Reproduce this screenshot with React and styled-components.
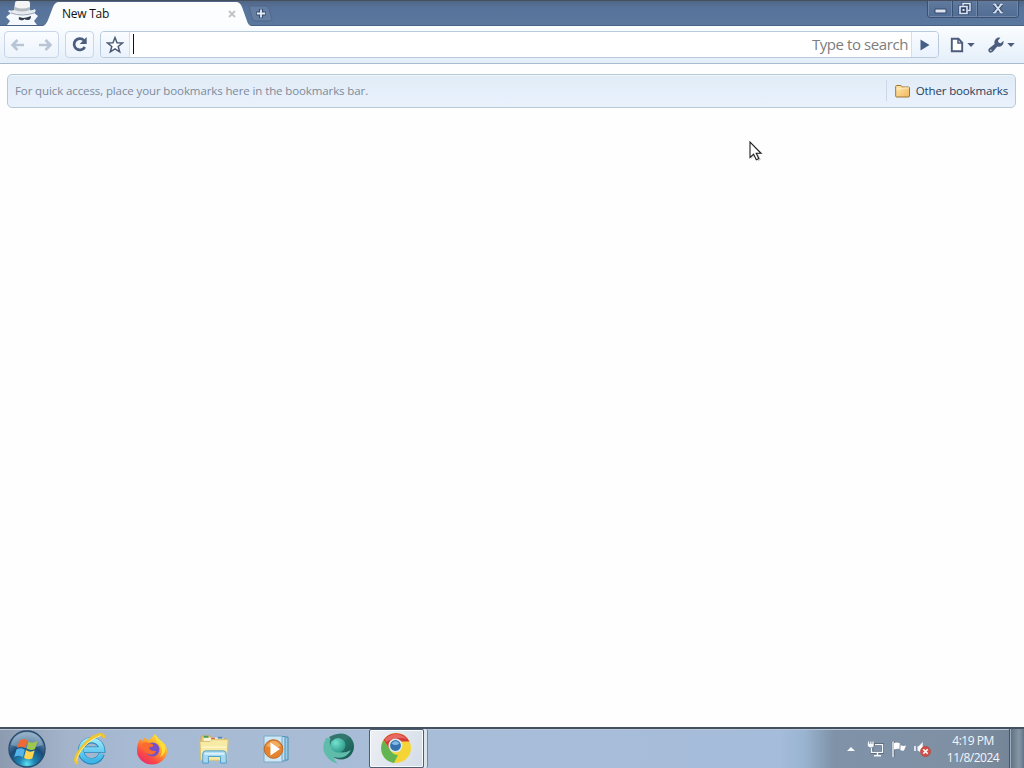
import React from "react";
import styled, { createGlobalStyle } from "styled-components";

const GlobalStyle = createGlobalStyle`
    * {
        box-sizing: border-box;
    }

    body {
        margin: 0;
        overflow: hidden;
        font-family: "Open Sans", "Noto Sans", sans-serif;
        font-size: 12px;
    }

    svg {
        display: block;
        flex: none;
    }
`;

function IncognitoIcon() {
    return (
        <svg width="32" height="24" viewBox="0 0 32 24">
            <path d="M1 24 L4 20 L0 16 L6 11 L27 11 L32 15 L28 20 L31 24 Z" fill="#f5f8fc" />
            <path d="M3 9 Q1 11 5 12 Q15 15 27 12 Q31 11 29 8 Q26 10 23 9 L8 9 Q5 10 3 9 Z" fill="#e7ebef" />
            <path d="M9 2 Q9 0 11 0 L22 0 Q24 0 24 2 L24 10 Q16 12 8 10 Z" fill="#f3f4f3" />
            <path d="M9 6 Q16 9 24 6 L24 9 Q16 12 8 9 Z" fill="#b3babf" />
            <path d="M5 12 Q16 16 28 12" stroke="#9ba8ba" fill="none" />
            <path d="M13 16 L17 17 Q20 17 25 15 Q25 19 22 19 Q19 19 18.5 18 Q17 20 14.5 19 Q12 19 13 16 Z" fill="#343e4d" />
        </svg>
    );
}

function ArrowIcon({ flip }) {
    return (
        <svg width="16" height="14" viewBox="0 0 16 14">
            <path
                d={flip ? "M8.5 2 L13.5 7 L8.5 12 M13 7 H2" : "M7.5 2 L2.5 7 L7.5 12 M3 7 H14"}
                fill="none"
                stroke="#b8c5d4"
                strokeWidth="2.6"
            />
        </svg>
    );
}

function ReloadIcon() {
    return (
        <svg width="17" height="17" viewBox="0 0 17 17">
            <path d="M13 4.4 A5.7 5.7 0 1 0 13.8 11" fill="none" stroke="#4b5c7c" strokeWidth="2.7" />
            <path d="M15.7 1 V8 H8.7 Z" fill="#4b5c7c" />
        </svg>
    );
}

function StarIcon() {
    return (
        <svg width="18" height="18" viewBox="0 0 18 18">
            <path
                d="M9 1.6 L11 6.7 L16.4 7 L12.2 10.5 L13.7 15.9 L9 12.9 L4.3 15.9 L5.8 10.5 L1.6 7 L7 6.7 Z"
                fill="#fff"
                stroke="#4b5b77"
                strokeWidth="1.5"
            />
        </svg>
    );
}

function PageIcon() {
    return (
        <svg width="14" height="16" viewBox="0 0 14 16">
            <path d="M1.8 1.8 H8.4 L12.2 5.7 V14.2 H1.8 Z" fill="#fff" stroke="#4b5c7c" strokeWidth="1.9" />
            <path d="M8 2 V6 H12" fill="none" stroke="#4b5c7c" strokeWidth="1.5" />
        </svg>
    );
}

function WrenchIcon() {
    return (
        <svg width="16" height="16" viewBox="0 0 16 16">
            <path d="M1 11.4 L6.6 7 Q5.8 4 7.8 1.9 Q9.8 0 12.4 0.8 L10 3.4 L10.5 5.6 L12.8 6.2 L15.4 3.8 Q16 6.6 14 8.6 Q12 10.3 9.3 9.6 L4.8 14.8 Q2.7 16.4 1 14.9 Q-0.4 13.2 1 11.4 Z" fill="#4b5c7c" />
            <circle cx="2.8" cy="13.2" r="0.8" fill="#e6eef8" />
        </svg>
    );
}

function CaretIcon() {
    return (
        <svg width="8" height="4" viewBox="0 0 8 4">
            <path d="M0.3 0 H7.7 L4 4 Z" fill="#4b5c7c" />
        </svg>
    );
}

function FolderIcon() {
    return (
        <svg width="16" height="14" viewBox="0 0 16 14">
            <defs>
                <linearGradient id="folder" x1="0" y1="0" x2="1" y2="1">
                    <stop offset="0" stopColor="#ffe8b0" />
                    <stop offset="1" stopColor="#f1b85c" />
                </linearGradient>
            </defs>
            <path d="M0.7 12 V2.5 Q0.7 1.5 1.7 1.5 H6 L7.5 3 H13.5 Q14.5 3 14.5 4 V12 Q14.5 13 13.5 13 H1.7 Q0.7 13 0.7 12 Z" fill="url(#folder)" stroke="#9c7438" />
            <path d="M1.5 5 H7 L8.5 4 H14" stroke="#fff0c6" fill="none" />
        </svg>
    );
}

function StartOrb() {
    return (
        <svg width="40" height="40" viewBox="0 0 40 40">
            <defs>
                <radialGradient id="orb" cx="50%" cy="92%" r="85%">
                    <stop offset="0" stopColor="#5fe0f2" />
                    <stop offset="0.25" stopColor="#1f86b4" />
                    <stop offset="0.6" stopColor="#1b4c78" />
                    <stop offset="1" stopColor="#7f9db8" />
                </radialGradient>
            </defs>
            <circle cx="20" cy="20" r="18" fill="url(#orb)" stroke="#294d70" strokeWidth="1.4" />
            <path d="M4 16 Q7 4 20 3.5 Q33 4 36 16 Q20 22 4 16 Z" fill="#b5cddd" opacity="0.42" />
            <path d="M12.5 11.5 Q17 8.5 20.5 11.5 L18.5 19 Q14.5 16.5 10 19 Z" fill="#ef6934" />
            <path d="M21.5 12.5 Q25 15 30.5 12 L28 20 Q24 22 19.5 19.5 Z" fill="#9fc74b" />
            <path d="M9.5 20.5 Q13.5 18 17.8 20.8 L15.8 28.3 Q12 25.5 7.3 28 Z" fill="#55b5ea" />
            <path d="M19 21 Q23 24 27.6 21.5 L25.3 29.5 Q21 31.5 17 28.7 Z" fill="#ffd451" />
        </svg>
    );
}

function ExplorerEIcon() {
    return (
        <svg width="34" height="34" viewBox="0 0 34 34">
            <defs>
                <linearGradient id="ie" x1="0" y1="0" x2="0" y2="1">
                    <stop offset="0" stopColor="#9be8fc" />
                    <stop offset="1" stopColor="#3fb4e6" />
                </linearGradient>
            </defs>
            <path d="M28.6 22 A10.5 10.5 0 1 1 29 17.6 H11" fill="none" stroke="#2789bd" strokeWidth="6.4" />
            <path d="M28.4 22 A10.5 10.5 0 1 1 29 17.6 H11" fill="none" stroke="url(#ie)" strokeWidth="4.8" />
            <path d="M5 31.5 Q-1 29 8 17 Q16 6 25 3 Q31 1 31 6" fill="none" stroke="#eec62f" strokeWidth="3" />
            <path d="M4 29 Q3 26 9 17 Q17 7 28 3.5" fill="none" stroke="#ffec85" />
        </svg>
    );
}

function FirefoxIcon() {
    return (
        <svg width="32" height="32" viewBox="0 0 32 32">
            <defs>
                <linearGradient id="fox" x1="0.85" y1="0" x2="0.15" y2="1">
                    <stop offset="0" stopColor="#fff04a" />
                    <stop offset="0.4" stopColor="#ffa428" />
                    <stop offset="0.72" stopColor="#fb4a45" />
                    <stop offset="1" stopColor="#e62574" />
                </linearGradient>
            </defs>
            <path d="M4 6 L7 8 L8 4.5 L12 7.5 Q16 5 19 1 Q20 5 24 7 Q31 11 31 18 A15 13.5 0 0 1 1 18 Q1 11 4 6 Z" fill="url(#fox)" />
            <circle cx="16.5" cy="16.5" r="7" fill="#7550c6" />
            <path d="M5 12 Q8 7.5 14 10.5 Q18 10.5 17 13.5 L13 14.5 Q14 18.5 20 18 Q18 23 12.5 21 Q7 18 6 13" fill="#fb6a2e" />
            <path d="M19 1 Q19 8 24 12 Q28 18 24 24 Q31 20 29 12 Q24 8 19 1 Z" fill="#ffdd37" />
        </svg>
    );
}

function FileExplorerIcon() {
    return (
        <svg width="34" height="30" viewBox="0 0 34 32">
            <path d="M3 4 Q3 2 5 2 H13 L15 5 H29 Q31 5 31 7 V27 H3 Z" fill="#e4cb78" stroke="#c9ab56" />
            <path d="M6 4 H27 V12 H6 Z" fill="#f9f4d6" />
            <path d="M6 3 H11" stroke="#4a9d60" strokeWidth="2" />
            <path d="M14 5 H18" stroke="#d96655" strokeWidth="2" />
            <path d="M21 4 H26" stroke="#5688be" strokeWidth="2" />
            <path d="M2 8 H13 L15 6 H32 L31 28 H3 Z" fill="#f7eaa5" stroke="#d9c26e" />
            <path d="M4 14 H30 M4 19 H30" stroke="#fff5c4" strokeWidth="2" />
            <path d="M5 31 V21 Q5 18 8 18 H27 Q30 18 30 21 V31 H24 V24 H11 V31 Z" fill="#a8d9f2" stroke="#4a9bc8" />
            <path d="M7 21 H28" stroke="#dbf4ff" strokeWidth="2" />
        </svg>
    );
}

function MediaPlayerIcon() {
    return (
        <svg width="28" height="28" viewBox="0 0 28 28">
            <path d="M8 2 H26 V25 H8 Z" fill="#9bcce7" stroke="#4e89ae" />
            <path d="M5 1.5 H23 V26 H5 Z" fill="#b8def1" stroke="#5592b8" />
            <path d="M2 1 H20 V27 H2 Z" fill="#cfe6f4" stroke="#78aac9" />
            <circle cx="11.5" cy="14" r="9.3" fill="#e5842f" stroke="#b96a2d" />
            <path d="M4 11 Q12 1 19 11 Q12 14 4 11 Z" fill="#f9bd77" opacity="0.7" />
            <path d="M8.5 7.5 L18 14 L8.5 20.5 Z" fill="#fff" />
        </svg>
    );
}

function TealSwirlIcon() {
    return (
        <svg width="34" height="34" viewBox="0 0 34 34">
            <defs>
                <linearGradient id="teal" x1="0" y1="0" x2="1" y2="1">
                    <stop offset="0" stopColor="#3b8b7e" />
                    <stop offset="1" stopColor="#14564f" />
                </linearGradient>
                <radialGradient id="tealBall" cx="35%" cy="35%" r="70%">
                    <stop offset="0" stopColor="#74e3cf" />
                    <stop offset="1" stopColor="#2f9a8a" />
                </radialGradient>
            </defs>
            <ellipse cx="20" cy="14.5" rx="13" ry="13" fill="url(#teal)" />
            <path d="M5 6 Q-1 17 6 25 Q10 30 17 32 Q13 28 13 25 Q25 28 30 18 Q21 23 13 18 Q7 12 9 6 Z" fill="#5fbcab" />
            <circle cx="17" cy="13" r="7.5" fill="url(#tealBall)" />
            <path d="M8 5 Q18 -1 27 5 L24 9 Q17 3 11 9 Z" fill="#34766d" />
        </svg>
    );
}

function ChromeIcon() {
    return (
        <svg width="32" height="32" viewBox="0 0 32 32">
            <circle cx="16" cy="16" r="15" fill="#f5d536" />
            <path d="M3.5 8 A15 15 0 0 1 29.5 9.5 H16 L10 18 Z" fill="#d63a36" />
            <path d="M3.5 8 L10 18 Q13 23 18 23 L14 31 A15 15 0 0 1 3.5 8 Z" fill="#62b552" />
            <path d="M5 7 Q16 -3 27 7 Q15 4 6 10 Z" fill="#f3988d" opacity="0.5" />
            <circle cx="15.5" cy="13.5" r="7" fill="#dfe9ee" />
            <circle cx="15.5" cy="13.5" r="5.4" fill="#3472ae" />
            <path d="M11.5 11.5 Q15.5 6.5 19.5 11.5 Q15.5 14.5 11.5 11.5 Z" fill="#83b8e4" />
        </svg>
    );
}

function NetworkIcon() {
    return (
        <svg width="18" height="18" viewBox="0 0 18 18">
            <path d="M6 4.5 H15.5 V12.5 H5 V8" fill="none" stroke="#3f4b58" strokeWidth="2.8" opacity="0.5" />
            <path d="M8 4.7 H15.5 V12.3 H4.5 V8" fill="none" stroke="#f4f7fa" strokeWidth="1.3" />
            <path d="M10.5 12.5 V15 M7 15.7 H14" stroke="#f4f7fa" strokeWidth="1.4" />
            <path d="M1.5 1.5 V4 M3.8 1.5 V4 M6 1.5 V4" stroke="#f4f7fa" strokeWidth="1.1" />
            <path d="M0.8 3.8 H6.8 V5.8 Q5.8 7.4 3.8 7.4 Q1.8 7.4 0.8 5.8 Z" fill="#f4f7fa" />
        </svg>
    );
}

function FlagIcon() {
    return (
        <svg width="17" height="18" viewBox="0 0 17 18">
            <path d="M2.3 1.5 V17" stroke="#46525f" strokeWidth="3" opacity="0.5" />
            <path d="M2 1.5 V17" stroke="#e7edf3" strokeWidth="1.5" />
            <path d="M3 3 Q6 2 9 3.6 V5 Q12 6.5 15 5.6 L13 10.5 Q11 11 9 9.8 V9 Q6 8.5 3 9.4 Z" fill="#fff" />
            <path d="M9 4.5 V9.5" stroke="#83909d" />
        </svg>
    );
}

function MutedIcon() {
    return (
        <svg width="18" height="18" viewBox="0 0 18 18">
            <path d="M1 6 V11" stroke="#f7f9fb" strokeWidth="1.6" />
            <path d="M3.2 6 H4.6 L9 1.5 V15.5 L4.6 11 H3.2 Z" fill="#f7f9fb" stroke="#8795a4" strokeWidth="0.6" />
            <circle cx="11.5" cy="11.5" r="4.9" fill="#cf5148" stroke="#b84842" />
            <path d="M9.3 9.3 L13.7 13.7 M13.7 9.3 L9.3 13.7" stroke="#fff" strokeWidth="1.6" />
        </svg>
    );
}

const apps = [
    { name: "Internet Explorer", Icon: ExplorerEIcon },
    { name: "Firefox", Icon: FirefoxIcon },
    { name: "File Explorer", Icon: FileExplorerIcon },
    { name: "Media Player", Icon: MediaPlayerIcon },
    { name: "Web", Icon: TealSwirlIcon },
];

export default function App() {
    return (
        <Screen>
            <GlobalStyle />
            <TitleBar>
                <Incognito><IncognitoIcon /></Incognito>
                <Tab>
                    <TabShape viewBox="0 0 208 24">
                        <path d="M0 24 Q3 23 5 18 L10 5 Q12 0 16 0 H193 Q197 0 199 5 L204 19 Q205 23 208 24 Z" fill="#fbfdff" />
                    </TabShape>
                    <TabTitle>New Tab</TabTitle>
                    <svg width="8" height="8" viewBox="0 0 8 8">
                        <path d="M1 1 L7 7 M7 1 L1 7" stroke="#c0c4c9" strokeWidth="1.8" />
                    </svg>
                </Tab>
                <NewTab aria-label="New tab">
                    <svg width="25" height="17" viewBox="0 0 25 17">
                        <path d="M1 1 H18 Q20 1 21 4 L24 14 Q24 16 22 16 H7 Q5 16 4 13 Z" fill="#637da3" stroke="#506788" />
                        <path d="M13 4 V13 M8.5 8.5 H17.5" stroke="#314867" strokeWidth="3.8" />
                        <path d="M13 4.5 V12.5 M9 8.5 H17" stroke="#e6edf6" strokeWidth="1.8" />
                    </svg>
                </NewTab>
                <WindowControls>
                    <WindowButton $width={24} aria-label="Minimize">
                        <MinimizeGlyph width="13" height="6" viewBox="0 0 13 6">
                            <path d="M1 1 H12 V5 H1 Z" fill="#dbe4f0" stroke="#35496b" />
                        </MinimizeGlyph>
                    </WindowButton>
                    <WindowButton $width={25} aria-label="Restore">
                        <svg width="14" height="13" viewBox="0 0 14 13">
                            <path d="M5 3.5 V1.5 H12 V8.5 H9.5 M2 4.5 H9 V11.5 H2 Z" fill="none" stroke="#35496b" strokeWidth="3" />
                            <path d="M5 3.5 V1.5 H12 V8.5 H9.5" fill="none" stroke="#dbe6f5" strokeWidth="1.5" />
                            <path d="M2 4.5 H9 V11.5 H2 Z" fill="#35496b" stroke="#dbe6f5" strokeWidth="1.6" />
                            <path d="M4.5 7 H6.5 V9 H4.5 Z" fill="#dbe6f5" />
                        </svg>
                    </WindowButton>
                    <WindowButton $width={41} aria-label="Close">
                        <svg width="12" height="11" viewBox="0 0 12 11">
                            <path d="M2.4 1 L9.6 10 M9.6 1 L2.4 10" stroke="#3a4c6b" strokeWidth="3.8" />
                            <path d="M2.4 1 L9.6 10 M9.6 1 L2.4 10" stroke="#dae5f4" strokeWidth="1.9" />
                            <path d="M1.2 1.3 H4.4 M7.6 1.3 H10.8 M1.2 9.7 H4.4 M7.6 9.7 H10.8" stroke="#dae5f4" />
                        </svg>
                    </WindowButton>
                </WindowControls>
            </TitleBar>

            <Toolbar>
                <ToolButton $width={55} $spread><ArrowIcon /><ArrowIcon flip /></ToolButton>
                <ToolButton $width={29}><ReloadIcon /></ToolButton>
                <AddressBar>
                    <AddressEnd $width={28}><StarIcon /></AddressEnd>
                    <AddressField><TextCaret /><SearchHint>Type to search</SearchHint></AddressField>
                    <AddressEnd $width={26}>
                        <svg width="10" height="12" viewBox="0 0 10 12">
                            <path d="M0.5 0.5 L9.5 6 L0.5 11.5 Z" fill="#466085" />
                        </svg>
                    </AddressEnd>
                </AddressBar>
                <MenuButton><PageIcon /><CaretIcon /></MenuButton>
                <MenuButton $wide><WrenchIcon /><CaretIcon /></MenuButton>
            </Toolbar>

            <Page>
                <BookmarksBar>
                    <BookmarksHint>For quick access, place your bookmarks here in the bookmarks bar.</BookmarksHint>
                    <OtherBookmarks><FolderIcon /><span>Other bookmarks</span></OtherBookmarks>
                </BookmarksBar>
            </Page>

            <Taskbar>
                <StartButton><StartOrb /></StartButton>
                {apps.map(({ name, Icon }) => (
                    <TaskItem key={name} aria-label={name}><Icon /></TaskItem>
                ))}
                <ActiveTask><ChromeIcon /></ActiveTask>
                <StackedEdge />
                <Tray>
                    <svg width="8" height="4" viewBox="0 0 8 4">
                        <path d="M0 4 L4 0 L8 4 Z" fill="#f7fafc" />
                    </svg>
                    <TrayIcons><NetworkIcon /><FlagIcon /><MutedIcon /></TrayIcons>
                    <Clock><span>4:19 PM</span><span>11/8/2024</span></Clock>
                    <ShowDesktop />
                </Tray>
            </Taskbar>

            <Pointer viewBox="0 0 16 22">
                <path d="M2 2 V18 L6 14 L9 20 L12 19 L9 13 H14 Z" fill="#000" opacity="0.2" />
                <path d="M1 1 V16.5 L4.6 13.2 L7.3 18.7 L9.8 17.5 L7.2 12.3 H12 Z" fill="#fff" stroke="#202020" strokeWidth="1.1" />
            </Pointer>
        </Screen>
    );
}

const Screen = styled.div`
    position: relative;
    display: flex;
    flex-direction: column;
    width: 1024px;
    height: 768px;
    background: #fefefe;
`;

const TitleBar = styled.header`
    display: flex;
    height: 26px;
    background: linear-gradient(#506685, #57739b 30%, #5a779e);
    border-top: 1px solid #454e5c;
    border-bottom: 1px solid #496386;
`;

const Incognito = styled.div`
    width: 43px;
    padding-left: 6px;
`;

const Tab = styled.div`
    position: relative;
    display: flex;
    align-items: center;
    justify-content: space-between;
    width: 208px;
    height: 24px;
    margin-top: 1px;
    padding: 0 15px 0 19px;
`;

const TabShape = styled.svg`
    position: absolute;
    inset: 0;
    width: 208px;
    height: 24px;
`;

const TabTitle = styled.span`
    position: relative;
    padding-bottom: 2px;
    color: #111;
    letter-spacing: -0.25px;

    & + svg {
        position: relative;
    }
`;

const NewTab = styled.div`
    padding: 4px 0 0;
    margin-left: -3px;
`;

const WindowControls = styled.div`
    display: flex;
    height: 17px;
    margin: 0 5px 0 auto;
    border: 1px solid #394f74;
    border-top: 0;
    border-radius: 0 0 4px 4px;
    overflow: hidden;
`;

const WindowButton = styled.div`
    display: flex;
    align-items: center;
    justify-content: center;
    width: ${props => props.$width}px;
    background: linear-gradient(#60799d, #526e95);
    border: 1px solid #7188a8;
    border-top: 0;

    & + & {
        border-left-color: #394f74;
    }
`;

const MinimizeGlyph = styled.svg`
    margin-top: 5px;
`;

const Toolbar = styled.nav`
    display: flex;
    align-items: flex-start;
    height: 38px;
    padding: 5px 9px 0 4px;
    background: linear-gradient(#fbfdff, #e4eef9);
    border-bottom: 1px solid #aabbcd;
`;

const ToolButton = styled.div`
    display: flex;
    align-items: center;
    justify-content: ${props => (props.$spread ? "space-between" : "center")};
    width: ${props => props.$width}px;
    height: 27px;
    margin-right: 6px;
    padding: 0 5px;
    background: linear-gradient(#fafcff, #edf4fd);
    border: 1px solid #c8d6e7;
    border-radius: 4px;
`;

const AddressBar = styled.div`
    display: flex;
    flex: 1;
    height: 27px;
    border: 1px solid #b9cadd;
    border-radius: 4px;
    overflow: hidden;
`;

const AddressEnd = styled.div`
    display: flex;
    align-items: center;
    justify-content: center;
    width: ${props => props.$width}px;
    background: linear-gradient(#f9fcff, #e9f2fd);
`;

const AddressField = styled.div`
    display: flex;
    flex: 1;
    align-items: center;
    justify-content: space-between;
    padding: 0 3px 2px;
    background: #fff;
    border: 0 solid #d3dfec;
    border-width: 0 1px;
`;

const TextCaret = styled.div`
    width: 1px;
    height: 20px;
    background: #111;
`;

const SearchHint = styled.span`
    color: #7d7d7d;
    font-size: 15px;
    letter-spacing: -0.42px;
`;

const MenuButton = styled.div`
    display: flex;
    align-items: center;
    gap: 3px;
    height: 27px;
    margin-left: ${props => (props.$wide ? 13 : 11)}px;
`;

const Page = styled.main`
    flex: 1;
    padding: 10px 8px 0 7px;
`;

const BookmarksBar = styled.div`
    display: flex;
    align-items: center;
    justify-content: space-between;
    height: 34px;
    padding: 0 7px 1px;
    background: linear-gradient(#e1ecf6, #e9f1fd);
    border: 1px solid #b9c8d6;
    border-radius: 5px;
    box-shadow: inset 0 1px #edf6fb;
`;

const BookmarksHint = styled.span`
    color: #7d8b9a;
    font-size: 11.5px;
    letter-spacing: -0.11px;
`;

const OtherBookmarks = styled.div`
    display: flex;
    align-items: center;
    gap: 5px;
    height: 21px;
    padding-left: 8px;
    color: #243e60;
    border-left: 1px solid #cad8e7;
    font-size: 11.5px;
    letter-spacing: -0.15px;
`;

const Taskbar = styled.footer`
    display: flex;
    height: 41px;
    background: linear-gradient(90deg, #8c9bb0, #a3b3ca 65px, #a7bad3 130px, #a8bdd8 440px, #a5bcda 780px, #99b4d1 804px, #7f92a8 834px, #7f90a4 960px, #728294);
    border-top: 2px solid #444f60;
    box-shadow: inset 0 1px #b9c7d8;
`;

const StartButton = styled.div`
    padding-left: 7px;
    width: 59px;
`;

const TaskItem = styled.div`
    display: flex;
    align-items: center;
    justify-content: center;
    width: 62px;
    padding-right: 1px;
`;

const ActiveTask = styled.div`
    display: flex;
    align-items: center;
    justify-content: center;
    width: 55px;
    padding: 0 2px 2px 0;
    background: linear-gradient(120deg, #edf0f4, #d2dce8);
    border: 1px solid #4d5e72;
    border-radius: 2px;
    box-shadow: inset 0 0 0 1px #f8fafc;
`;

const StackedEdge = styled.div`
    width: 4px;
    background: #dbe4ed;
    border-right: 1px solid #75879b;
    border-radius: 0 2px 2px 0;
`;

const Tray = styled.div`
    display: flex;
    align-items: center;
    margin-left: auto;
`;

const TrayIcons = styled.div`
    display: flex;
    gap: 6px;
    margin-left: 12px;
`;

const Clock = styled.time`
    display: flex;
    flex-direction: column;
    align-items: center;
    width: 54px;
    margin: 1px 9px 0 14px;
    color: #f3f6f9;
    font-size: 12px;
    line-height: 17px;
    letter-spacing: -0.5px;
`;

const ShowDesktop = styled.div`
    width: 15px;
    height: 39px;
    background: linear-gradient(90deg, #5d6f80, #8696a5 65%, #62748a);
    border-left: 1px solid #455568;
    box-shadow: inset 1px 0 #9aabbc;
`;

const Pointer = styled.svg`
    position: absolute;
    top: 141px;
    left: 749px;
    width: 16px;
    height: 22px;
`;
